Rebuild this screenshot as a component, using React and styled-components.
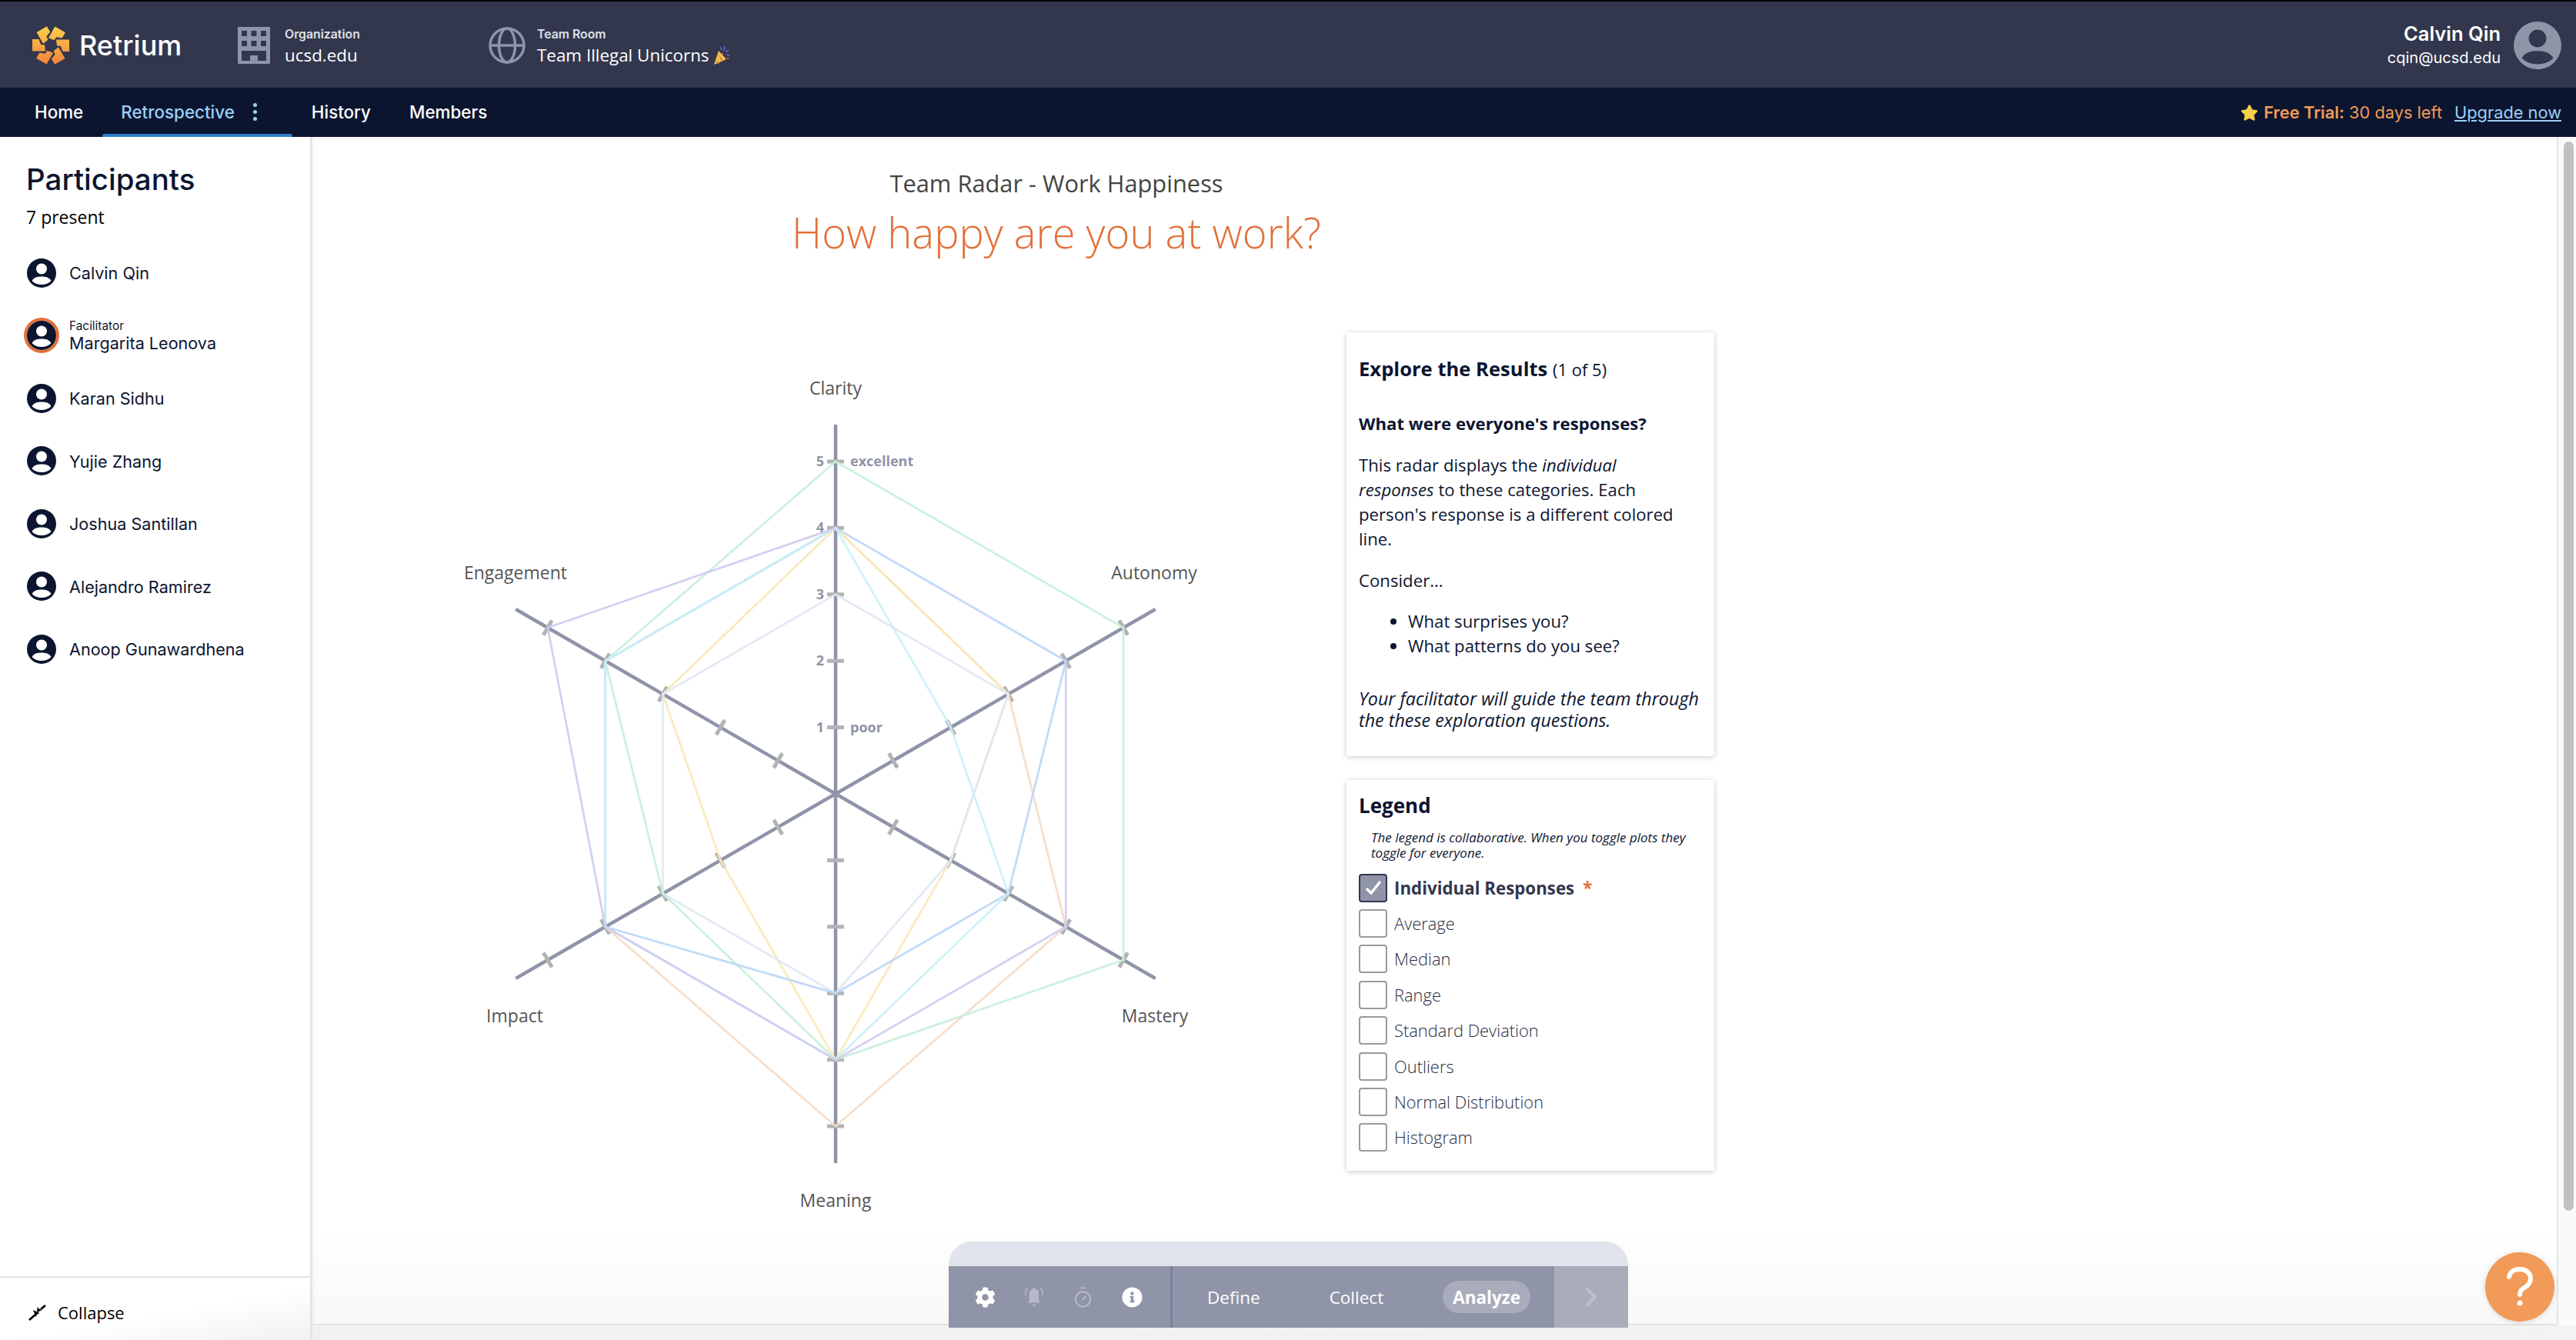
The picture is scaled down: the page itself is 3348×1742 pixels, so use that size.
import React from 'react';
import styled, { createGlobalStyle } from 'styled-components';
import { FaCog, FaInfoCircle, FaStar } from 'react-icons/fa';
import { Timer, ChevronRight } from 'lucide-react';

const participants = [
  { name: 'Calvin Qin' },
  { name: 'Margarita Leonova', role: 'Facilitator' },
  { name: 'Karan Sidhu' },
  { name: 'Yujie Zhang' },
  { name: 'Joshua Santillan' },
  { name: 'Alejandro Ramirez' },
  { name: 'Anoop Gunawardhena' },
];

const legendItems = ['Average', 'Median', 'Range', 'Standard Deviation', 'Outliers', 'Normal Distribution', 'Histogram'];

// radar geometry, in page pixels
const CX = 1086;
const CY = 1032;
const UNIT = 86.4;
const angles = [0, 60, 120, 180, 240, 300];

const point = (axis, r) => {
  const a = (angles[axis] * Math.PI) / 180;
  return [CX + Math.sin(a) * r, CY - Math.cos(a) * r];
};

// clarity, autonomy, mastery, meaning, impact, engagement
// painted in this order, the later line wins where two overlap
const responses = [
  { color: '#f5dcc6', values: [4, 3, 4, 5, 4, 4] },
  { color: '#f9e8b8', values: [4, 3, 2, 4, 2, 3] },
  { color: '#e0e7f5', values: [3, 3, 2, 3, 3, 3] },
  { color: '#c8efdc', values: [5, 5, 5, 4, 3, 4] },
  { color: '#bcd6f6', values: [4, 4, 3, 3, 4, 4] },
  { color: '#c9f1f8', values: [4, 2, 3, 4, 4, 4] },
];

// starts at autonomy and stops at clarity, so the blue line stays on top between those two
const purpleLine = [[1, 4], [2, 4], [3, 4], [4, 4], [5, 5], [0, 4]];

const axisLabels = [
  { text: 'Clarity', x: 1086, y: 505 },
  { text: 'Autonomy', x: 1500, y: 745 },
  { text: 'Mastery', x: 1501, y: 1321 },
  { text: 'Meaning', x: 1086, y: 1561 },
  { text: 'Impact', x: 669, y: 1321 },
  { text: 'Engagement', x: 670, y: 745 },
];

const RadarChart = () => (
  <ChartSvg viewBox="560 432 1080 1180">
    {angles.map((deg, i) => {
      const [x, y] = point(i, 480);
      return <line key={deg} x1={CX} y1={CY} x2={x} y2={y} stroke="#8f94a8" strokeWidth="4.5" />;
    })}
    {angles.map((deg) =>
      [1, 2, 3, 4, 5].map((n) => (
        <rect
          key={`${deg}-${n}`}
          x={CX - 11}
          y={CY - n * UNIT - 2.5}
          width="22"
          height="5"
          fill="#b2b3b5"
          transform={`rotate(${deg} ${CX} ${CY})`}
        />
      ))
    )}
    {responses.map((r) => (
      <polygon
        key={r.color}
        points={r.values.map((v, i) => point(i, v * UNIT).join(',')).join(' ')}
        fill="none"
        stroke={r.color}
        strokeWidth="2.8"
        strokeOpacity="0.9"
      />
    ))}
    <polyline
      points={purpleLine.map(([axis, v]) => point(axis, v * UNIT).join(',')).join(' ')}
      fill="none"
      stroke="#cfcbee"
      strokeWidth="2.8"
      strokeOpacity="0.9"
    />
    {[1, 2, 3, 4, 5].map((n) => (
      <ScaleText key={n} x={1066} y={CY - n * UNIT + 6} textAnchor="middle">
        {n}
      </ScaleText>
    ))}
    <ScaleText x={1105} y={CY - 5 * UNIT + 6}>excellent</ScaleText>
    <ScaleText x={1105} y={CY - UNIT + 6}>poor</ScaleText>
    {axisLabels.map((l) => (
      <AxisText key={l.text} x={l.x} y={l.y + 8} textAnchor="middle">
        {l.text}
      </AxisText>
    ))}
  </ChartSvg>
);

const Logo = () => {
  const shard = [[7, -7.5], [24, -7.5], [24, 8], [15.5, 8], [13, 1], [8, 0.5]];
  return (
    <svg width="50" height="50" viewBox="-25 -25 50 50">
      <defs>
        <linearGradient id="logoFill" gradientUnits="userSpaceOnUse" x1="0" y1="-25" x2="0" y2="25">
          <stop offset="0" stopColor="#fbd04e" />
          <stop offset="1" stopColor="#f2813c" />
        </linearGradient>
      </defs>
      {angles.map((deg) => {
        const a = (deg * Math.PI) / 180;
        const pts = shard.map(([x, y]) => `${x * Math.cos(a) - y * Math.sin(a)},${x * Math.sin(a) + y * Math.cos(a)}`);
        return <polygon key={deg} points={pts.join(' ')} fill="url(#logoFill)" />;
      })}
    </svg>
  );
};

const BuildingIcon = () => (
  <svg width="42" height="48" viewBox="0 0 42 48">
    <path
      fillRule="evenodd"
      fill="#8f94a8"
      d="M1 0h40a1 1 0 0 1 1 1v46a1 1 0 0 1-1 1H1a1 1 0 0 1-1-1V1a1 1 0 0 1 1-1zM5 5v7h7V5zM17.500 5v7h7V5zM30 5v7h7V5zM5 18v7h7v-7zM17.500 18v7h7v-7zM30 18v7h7v-7zM5 31v13h11v-7h10v7h11V31z"
    />
  </svg>
);

const GlobeIcon = () => (
  <svg width="48" height="48" viewBox="0 0 48 48" fill="none" stroke="#8f94a8" strokeWidth="3.5">
    <circle cx="24" cy="24" r="22" />
    <ellipse cx="24" cy="24" rx="10.500" ry="22" />
    <path d="M3 24h42" />
  </svg>
);

const PartyPopper = () => (
  <svg width="22" height="26" viewBox="0 0 22 26">
    <path d="M1 25l6-18 10 11z" fill="#f3c04f" />
    <path d="M3.500 18l5 5-3 1zM6 11l8 9-3 1z" fill="#d9893a" />
    <path d="M9 2l2 4M15 1l-1 6M20 6l-4 3M21 13l-4-1" stroke="#6c6fd0" strokeWidth="1.500" fill="none" />
    <circle cx="12" cy="11" r="1.200" fill="#e2574c" />
    <circle cx="19" cy="17" r="1.200" fill="#e2574c" />
  </svg>
);

const PersonIcon = ({ size, disc, figure }) => (
  <svg width={size} height={size} viewBox="0 0 38 38">
    <circle cx="19" cy="19" r="19" fill={disc} />
    <circle cx="19" cy="13.500" r="7" fill={figure} />
    <path
      d="M6.500 29C9 24.500 14 23.500 19 23.500S29 24.500 31.500 29C28.500 32.500 24 34 19 34S9.500 32.500 6.500 29z"
      fill={figure}
    />
  </svg>
);

const BellIcon = () => (
  <svg width="28" height="30" viewBox="0 0 28 30" fill="none">
    <path
      d="M14 3c1 0 1.600.8 1.700 1.800C19 5.800 20 8.600 20 12v7l2.500 3.500h-17L8 19v-7c0-3.400 1-6.200 4.300-7.200C12.400 3.800 13 3 14 3zM11.500 24.500h5L14 27.500z"
      fill="#b7bac6"
    />
    <path d="M5.500 3C3.500 6 2.500 9 3 13M22.500 3c2 3 3 6 2.500 10" stroke="#b7bac6" strokeWidth="1.600" />
  </svg>
);

const CollapseIcon = () => (
  <svg width="24" height="24" viewBox="0 0 24 24" fill="#000" stroke="#000">
    <path d="M1 22l8-7" strokeWidth="2.600" fill="none" />
    <path d="M6.500 9.500l7.500 3.500-3 1.500-1.500 3z" strokeWidth="0.500" />
    <path d="M22 3l-6 5" strokeWidth="2.600" fill="none" />
    <path d="M11 12l1-6.500 2 2.500 3 1z" strokeWidth="0.500" />
  </svg>
);

const HelpGlyph = () => (
  <svg width="36" height="54" viewBox="0 0 36 54" fill="none" stroke="#fff" strokeWidth="6" strokeLinecap="round">
    <path d="M4 14C5 8 10 4 18 4c8 0 14 5 14 12 0 6-3 9-8 12-4 2-6 4-6 9" />
    <circle cx="18" cy="48" r="2.500" fill="#fff" stroke="#fff" strokeWidth="2" />
  </svg>
);

const App = () => (
  <>
    <GlobalStyle />
    <Page>
      <Header>
        <LogoGroup>
          <Logo />
          <Brand>Retrium</Brand>
        </LogoGroup>
        <Context $width="326px" $gap="19px">
          <BuildingIcon />
          <ContextText>
            <ContextLabel>Organization</ContextLabel>
            <ContextValue>ucsd.edu</ContextValue>
          </ContextText>
        </Context>
        <Context $gap="15px">
          <GlobeIcon />
          <ContextText>
            <ContextLabel>Team Room</ContextLabel>
            <ContextValue>
              Team Illegal Unicorns <PartyPopper />
            </ContextValue>
          </ContextText>
        </Context>
        <UserBlock>
          <UserText>
            <UserName>Calvin Qin</UserName>
            <UserMail>cqin@ucsd.edu</UserMail>
          </UserText>
          <PersonIcon size={62} disc="#8f94a8" figure="#32374d" />
        </UserBlock>
      </Header>
      <Nav>
        <NavTab>Home</NavTab>
        <NavTab $active>
          Retrospective
          <Dots>
            <i />
            <i />
            <i />
          </Dots>
        </NavTab>
        <NavTab>History</NavTab>
        <NavTab>Members</NavTab>
        <Trial>
          <FaStar size={23} color="#f9cf45" />
          <TrialText>
            <b>Free Trial:</b> 30 days left
          </TrialText>
          <Upgrade>Upgrade now</Upgrade>
        </Trial>
      </Nav>
      <Body>
        <Sidebar>
          <SideTitle>Participants</SideTitle>
          <Present>7 present</Present>
          <PeopleList>
            {participants.map((p) => (
              <Person key={p.name}>
                <AvatarRing $facilitator={!!p.role}>
                  <PersonIcon size={38} disc="#0c1530" figure="#fff" />
                </AvatarRing>
                <PersonText>
                  {p.role && <Role>{p.role}</Role>}
                  <span>{p.name}</span>
                </PersonText>
              </Person>
            ))}
          </PeopleList>
          <Collapse>
            <CollapseIcon />
            Collapse
          </Collapse>
        </Sidebar>
        <Workspace>
          <PanelRow>
            <Panel>
              <TitleBlock>
                <Subtitle>Team Radar - Work Happiness</Subtitle>
                <Question>How happy are you at work?</Question>
              </TitleBlock>
              <ContentRow>
                <RadarChart />
                <SideColumn>
                  <Card>
                    <CardTitle>
                      Explore the Results <small>(1 of 5)</small>
                    </CardTitle>
                    <CardLead>What were everyone's responses?</CardLead>
                    <CardText>
                      This radar displays the <em>individual responses</em> to these categories. Each person's response
                      is a different colored line.
                    </CardText>
                    <CardText>Consider...</CardText>
                    <CardList>
                      <li>What surprises you?</li>
                      <li>What patterns do you see?</li>
                    </CardList>
                    <CardNote>Your facilitator will guide the team through the these exploration questions.</CardNote>
                  </Card>
                  <LegendCard>
                    <LegendTitle>Legend</LegendTitle>
                    <LegendNote>The legend is collaborative. When you toggle plots they toggle for everyone.</LegendNote>
                    <LegendRow $checked>
                      <CheckBox $checked>
                        <svg width="24" height="24" viewBox="0 0 24 24" fill="none" stroke="#fff" strokeWidth="3.500">
                          <path d="M3 13l6 6L21 4" />
                        </svg>
                      </CheckBox>
                      Individual Responses <Star>*</Star>
                    </LegendRow>
                    {legendItems.map((item) => (
                      <LegendRow key={item}>
                        <CheckBox />
                        {item}
                      </LegendRow>
                    ))}
                  </LegendCard>
                </SideColumn>
              </ContentRow>
              <Toolbar>
                <ToolbarLip />
                <ToolbarBar>
                  <ToolIcons>
                    <FaCog size={27} color="#fff" />
                    <BellIcon />
                    <Timer size={29} color="#b7bac6" strokeWidth={1.600} />
                    <FaInfoCircle size={27} color="#fff" />
                  </ToolIcons>
                  <Stages>
                    <Stage>Define</Stage>
                    <Stage>Collect</Stage>
                    <Stage $current>Analyze</Stage>
                  </Stages>
                  <NextButton>
                    <ChevronRight size={40} color="#bdc0cc" strokeWidth={2.500} />
                  </NextButton>
                </ToolbarBar>
              </Toolbar>
              <HelpButton>
                <HelpGlyph />
              </HelpButton>
            </Panel>
            <ScrollTrack>
              <ScrollThumb />
            </ScrollTrack>
          </PanelRow>
          <BottomStrip />
        </Workspace>
      </Body>
    </Page>
  </>
);

export default App;

const GlobalStyle = createGlobalStyle`
  html, body {
    margin: 0;
    padding: 0;
    overflow: hidden;
    background: #fff;
  }
  * {
    box-sizing: border-box;
  }
`;

const Page = styled.div`
  width: 3348px;
  height: 1742px;
  display: flex;
  flex-direction: column;
  font-family: 'Open Sans', 'Liberation Sans', sans-serif;
  color: #0c1530;
`;

const Header = styled.header`
  height: 114px;
  flex: none;
  display: flex;
  align-items: center;
  padding: 2px 19px 0 41px;
  background: #32374d;
  border-top: 2px solid #000;
  font-family: Inter, 'Liberation Sans', sans-serif;
  color: #fff;
`;

const LogoGroup = styled.div`
  width: 268px;
  display: flex;
  align-items: center;
  gap: 12px;
`;

const Brand = styled.div`
  font-size: 36px;
  font-weight: 500;
`;

const Context = styled.div`
  width: ${(p) => p.$width || 'auto'};
  display: flex;
  align-items: center;
  gap: ${(p) => p.$gap};
`;

const ContextText = styled.div`
  display: flex;
  flex-direction: column;
  gap: 4px;
  padding-top: 3px;
`;

const ContextLabel = styled.div`
  font-size: 15.8px;
  font-weight: 600;
  color: #dfe1e8;
`;

const ContextValue = styled.div`
  font-family: 'Open Sans', sans-serif;
  font-size: 22.4px;
  line-height: 28px;
  display: flex;
  align-items: center;
  gap: 5px;
`;

const UserBlock = styled.div`
  margin-left: auto;
  display: flex;
  align-items: center;
  gap: 17px;
`;

const UserText = styled.div`
  display: flex;
  flex-direction: column;
  align-items: flex-end;
  gap: 4px;
  margin-top: -3px;
`;

const UserName = styled.div`
  font-size: 25.5px;
  font-weight: 600;
`;

const UserMail = styled.div`
  font-size: 20px;
`;

const Nav = styled.nav`
  height: 64px;
  flex: none;
  display: flex;
  align-items: stretch;
  padding: 0 19px 2px 20px;
  background: #0c1530;
  font-family: Inter, 'Liberation Sans', sans-serif;
`;

const NavTab = styled.div`
  position: relative;
  display: flex;
  align-items: center;
  padding: ${(p) => (p.$active ? '0 46px 0 24px' : '0 25px')};
  font-size: 22.4px;
  font-weight: 500;
  color: ${(p) => (p.$active ? '#9cd0f5' : '#fff')};

  ${(p) =>
    p.$active &&
    `&::after {
      content: '';
      position: absolute;
      left: 0;
      right: 0;
      bottom: -2px;
      height: 4px;
      border-radius: 3px 3px 0 0;
      background: #2f7fc8;
    }`}
`;

const Dots = styled.span`
  display: inline-flex;
  flex-direction: column;
  gap: 4px;
  margin-left: 24px;

  i {
    width: 5px;
    height: 5px;
    border-radius: 50%;
    background: #9cd0f5;
  }
`;

const Trial = styled.div`
  margin-left: auto;
  display: flex;
  align-items: center;
  font-size: 21.8px;
  padding-top: 2px;
`;

const TrialText = styled.span`
  color: #f09a56;
  margin-left: 7px;

  b {
    font-weight: 600;
  }
`;

const Upgrade = styled.a`
  margin-left: 16px;
  color: #9cd0f5;
  text-decoration: underline;
`;

const Body = styled.div`
  flex: 1;
  min-height: 0;
  display: flex;
`;

const Sidebar = styled.aside`
  width: 406px;
  flex: none;
  display: flex;
  flex-direction: column;
  border-right: 3px solid #e2e4ec;
  padding-top: 31px;
`;

const SideTitle = styled.h2`
  margin: 0;
  padding-left: 34px;
  font-family: Inter, 'Liberation Sans', sans-serif;
  font-size: 38.5px;
  font-weight: 500;
  line-height: 48px;
`;

const Present = styled.div`
  padding-left: 34px;
  margin-top: 9px;
  font-size: 23px;
  line-height: 32px;
  color: #000;
`;

const PeopleList = styled.div`
  flex: 1;
  display: flex;
  flex-direction: column;
  margin-top: 16px;
`;

const Person = styled.div`
  height: 81.5px;
  display: flex;
  align-items: center;
  gap: 17px;
  padding-left: 35px;
  font-family: Inter, 'Liberation Sans', sans-serif;
  font-size: 21.6px;
`;

const AvatarRing = styled.div`
  width: 38px;
  height: 38px;
  display: flex;
  border-radius: 50%;
  box-shadow: ${(p) => (p.$facilitator ? '0 0 0 4px #e2703a' : 'none')};
`;

const PersonText = styled.div`
  display: flex;
  flex-direction: column;
  padding-top: 1px;
`;

const Role = styled.span`
  font-size: 15.4px;
  line-height: 18px;
`;

const Collapse = styled.div`
  height: 83px;
  flex: none;
  display: flex;
  align-items: center;
  gap: 14px;
  padding-left: 37px;
  padding-top: 8px;
  border-top: 2px solid #e2e4ec;
  font-size: 22px;
  color: #000;
  background: linear-gradient(170deg, #fff 55%, #f1f1f1 100%);
`;

const Workspace = styled.div`
  flex: 1;
  min-width: 0;
  display: flex;
  flex-direction: column;
`;

const PanelRow = styled.div`
  flex: 1;
  min-height: 0;
  display: flex;
`;

const Panel = styled.main`
  position: relative;
  flex: 1;
  min-width: 0;
  border-right: 2px solid #e4e4e4;
  border-bottom: 2px solid #e4e4e4;
  box-shadow: inset 6px 8px 10px -8px rgba(0, 0, 0, 0.08);
  background: linear-gradient(180deg, #fff 92%, #f8f8f8 100%);
`;

const TitleBlock = styled.div`
  width: 1934px;
  padding-top: 41px;
  text-align: center;
`;

const Subtitle = styled.div`
  font-size: 30.8px;
  line-height: 38px;
  color: #444;
`;

const Question = styled.h1`
  margin: 6px 0 0;
  font-size: 54.3px;
  line-height: 78px;
  font-weight: 300;
  color: #e2703a;
`;

const ContentRow = styled.div`
  display: flex;
  align-items: flex-start;
  margin-top: 91px;
  padding-left: 154px;
`;

const ChartSvg = styled.svg`
  width: 1080px;
  height: 1180px;
  flex: none;
`;

const ScaleText = styled.text`
  font-size: 18px;
  font-weight: 700;
  fill: #8f94a8;
`;

const AxisText = styled.text`
  font-size: 23px;
  fill: #555;
`;

const SideColumn = styled.div`
  width: 478px;
  margin-left: 110px;
  display: flex;
  flex-direction: column;
  gap: 31px;
`;

const Card = styled.section`
  padding: 32px 12px 33px 16px;
  background: #fff;
  border-radius: 3px;
  box-shadow: 0 1px 7px rgba(0, 0, 0, 0.22);
`;

const LegendCard = styled(Card)`
  padding: 17px 12px 20px 16px;
`;

const CardTitle = styled.h3`
  margin: 0;
  font-size: 25.6px;
  line-height: 32px;
  font-weight: 700;

  small {
    font-size: 22px;
    font-weight: 400;
  }
`;

const CardLead = styled.p`
  margin: 39px 0 0;
  font-size: 22.2px;
  line-height: 32px;
  font-weight: 700;
`;

const CardText = styled.p`
  margin: 22px 0 0;
  max-width: 425px;
  font-size: 22.2px;
  line-height: 32px;
`;

const CardList = styled.ul`
  margin: 21px 0 0;
  padding-left: 64px;
  font-size: 22.2px;
  line-height: 32px;
`;

const CardNote = styled.p`
  margin: 38px 0 0;
  font-size: 23.3px;
  line-height: 28px;
  font-style: italic;
`;

const LegendTitle = styled.h3`
  margin: 0;
  font-size: 26px;
  line-height: 32px;
  font-weight: 700;
`;

const LegendNote = styled.p`
  margin: 16px 0 12px 16px;
  font-size: 17px;
  line-height: 20px;
  font-style: italic;
`;

const LegendRow = styled.div`
  height: 46.4px;
  display: flex;
  align-items: center;
  gap: 9px;
  font-size: ${(p) => (p.$checked ? '22.3px' : '21.9px')};
  font-weight: ${(p) => (p.$checked ? 700 : 300)};
  color: ${(p) => (p.$checked ? '#32374d' : '#272c42')};
`;

const CheckBox = styled.span`
  width: 37px;
  height: 37px;
  flex: none;
  display: flex;
  align-items: center;
  justify-content: center;
  border-radius: 4px;
  border: 2px solid ${(p) => (p.$checked ? '#32374d' : '#9a9a9a')};
  background: ${(p) => (p.$checked ? '#8f94a8' : '#fff')};
`;

const Star = styled.span`
  color: #e2703a;
  margin-left: 2px;
`;

const Toolbar = styled.div`
  position: absolute;
  left: 827px;
  bottom: -5px;
  width: 883px;
  display: flex;
  flex-direction: column;
`;

const ToolbarLip = styled.div`
  height: 32px;
  background: #e1e4ec;
  border-radius: 30px 30px 0 0;
`;

const ToolbarBar = styled.div`
  height: 80px;
  display: flex;
  align-items: stretch;
  background: #8f94a8;
`;

const ToolIcons = styled.div`
  width: 291px;
  flex: none;
  display: flex;
  align-items: center;
  justify-content: space-between;
  padding: 0 36px 0 34px;
  border-right: 3px solid #7b8198;
`;

const Stages = styled.div`
  flex: 1;
  display: flex;
  align-items: center;
  padding-left: 45px;
  gap: 90px;
`;

const Stage = styled.div`
  display: flex;
  align-items: center;
  height: 42px;
  padding: ${(p) => (p.$current ? '0 13px' : '0')};
  margin-left: ${(p) => (p.$current ? '-13px' : '0')};
  border-radius: 21px;
  font-size: 22.5px;
  font-weight: ${(p) => (p.$current ? 700 : 400)};
  color: #fff;
  background: ${(p) => (p.$current ? '#a8acbb' : 'transparent')};
`;

const NextButton = styled.div`
  width: 96px;
  flex: none;
  display: flex;
  align-items: center;
  justify-content: center;
  background: #a8acbb;
`;

const HelpButton = styled.div`
  position: absolute;
  right: 3px;
  bottom: 3px;
  width: 90px;
  height: 90px;
  display: flex;
  align-items: center;
  justify-content: center;
  border-radius: 50%;
  background: #f29a58;
  box-shadow: 0 1px 6px rgba(0, 0, 0, 0.15);
`;

const ScrollTrack = styled.div`
  width: 23px;
  flex: none;
  padding: 6px 3px 0 7px;
  background: #fafafa;
`;

const ScrollThumb = styled.div`
  height: 1390px;
  border-radius: 7px;
  background: #c1c1c1;
`;

const BottomStrip = styled.div`
  height: 19px;
  flex: none;
  background: linear-gradient(90deg, #f1f1f1, #f3f3f3);
`;
